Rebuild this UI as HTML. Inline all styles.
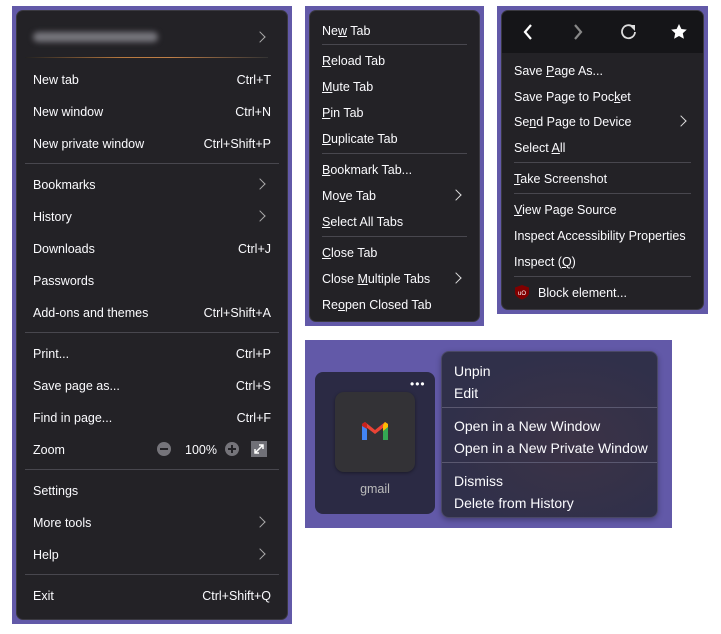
<!DOCTYPE html>
<html><head><meta charset="utf-8"><style>
*{margin:0;padding:0;box-sizing:border-box}
body{width:721px;height:634px;background:#fff;position:relative;overflow:hidden;font-family:"Segoe UI","Liberation Sans",sans-serif;color:#fbfbfe;font-size:12.5px}
.pur{position:absolute;background:#6259a8}
.menu{position:absolute;background:#232226;border-radius:7px;border:1px solid #3a3940}
.t{position:absolute;white-space:nowrap;line-height:16px;transform:translateY(-7px)}
.r{position:absolute;white-space:nowrap;line-height:16px;transform:translateY(-7px);text-align:right}
.sep{position:absolute;height:1px;background:#48474e}
.chev{position:absolute;width:8px;height:8px;border-right:1.3px solid #aaa;border-top:1.3px solid #aaa;transform:rotate(45deg)}
u{text-decoration:underline;text-underline-offset:1px}
</style></head><body>
<div class="pur" style="left:12px;top:6px;width:280px;height:618px"></div>
<div class="menu" style="left:16px;top:10px;width:272px;height:610px"></div>
<div style="position:absolute;left:33px;top:32px;width:125px;height:10px;background:#77767d;border-radius:5px;filter:blur(3px)"></div>
<div class="chev" style="left:256px;top:33px"></div>
<div style="position:absolute;left:25px;top:57px;width:243px;height:1px;background:linear-gradient(90deg,#222,#b8793e 40%,#c08048 60%,#333)"></div>
<div class="t" style="left:33px;top:79px">New tab</div><div class="r" style="right:450px;top:79px">Ctrl+T</div>
<div class="t" style="left:33px;top:111px">New window</div><div class="r" style="right:450px;top:111px">Ctrl+N</div>
<div class="t" style="left:33px;top:143px">New private window</div><div class="r" style="right:450px;top:143px">Ctrl+Shift+P</div>
<div class="sep" style="left:25px;top:163px;width:254px"></div>
<div class="t" style="left:33px;top:184px">Bookmarks</div><div class="chev" style="left:256px;top:180px"></div>
<div class="t" style="left:33px;top:216px">History</div><div class="chev" style="left:256px;top:212px"></div>
<div class="t" style="left:33px;top:248px">Downloads</div><div class="r" style="right:450px;top:248px">Ctrl+J</div>
<div class="t" style="left:33px;top:280px">Passwords</div>
<div class="t" style="left:33px;top:312px">Add-ons and themes</div><div class="r" style="right:450px;top:312px">Ctrl+Shift+A</div>
<div class="sep" style="left:25px;top:332px;width:254px"></div>
<div class="t" style="left:33px;top:353px">Print...</div><div class="r" style="right:450px;top:353px">Ctrl+P</div>
<div class="t" style="left:33px;top:385px">Save page as...</div><div class="r" style="right:450px;top:385px">Ctrl+S</div>
<div class="t" style="left:33px;top:417px">Find in page...</div><div class="r" style="right:450px;top:417px">Ctrl+F</div>
<div class="t" style="left:33px;top:449px">Zoom</div>
<div style="position:absolute;left:157px;top:442px;width:14px;height:14px;border-radius:50%;background:#75747a"><div style="position:absolute;left:3px;top:6px;width:8px;height:2px;background:#232226"></div></div>
<div class="t" style="left:185px;top:449px">100%</div>
<div style="position:absolute;left:225px;top:442px;width:14px;height:14px;border-radius:50%;background:#75747a"><div style="position:absolute;left:3px;top:6px;width:8px;height:2px;background:#232226"></div><div style="position:absolute;left:6px;top:3px;width:2px;height:8px;background:#232226"></div></div>
<svg style="position:absolute;left:251px;top:441px" width="16" height="16"><rect width="16" height="16" fill="#707077"/><path d="M4 12L12 4M8 4h4v4M4 8v4h4" stroke="#fff" stroke-width="1.5" fill="none"/></svg>
<div class="sep" style="left:25px;top:469px;width:254px"></div>
<div class="t" style="left:33px;top:490px">Settings</div>
<div class="t" style="left:33px;top:522px">More tools</div><div class="chev" style="left:256px;top:518px"></div>
<div class="t" style="left:33px;top:554px">Help</div><div class="chev" style="left:256px;top:550px"></div>
<div class="sep" style="left:25px;top:574px;width:254px"></div>
<div class="t" style="left:33px;top:595px">Exit</div><div class="r" style="right:450px;top:595px">Ctrl+Shift+Q</div>

<div class="pur" style="left:305px;top:6px;width:179px;height:320px"></div>
<div class="menu" style="left:309px;top:10px;width:171px;height:312px"></div>
<div class="t" style="left:322px;top:30px">Ne<u>w</u> Tab</div>
<div class="sep" style="left:322px;top:44px;width:145px"></div>
<div class="t" style="left:322px;top:60px"><u>R</u>eload Tab</div>
<div class="t" style="left:322px;top:86px"><u>M</u>ute Tab</div>
<div class="t" style="left:322px;top:112px"><u>P</u>in Tab</div>
<div class="t" style="left:322px;top:138px"><u>D</u>uplicate Tab</div>
<div class="sep" style="left:322px;top:153px;width:145px"></div>
<div class="t" style="left:322px;top:169px"><u>B</u>ookmark Tab...</div>
<div class="t" style="left:322px;top:195px">Mo<u>v</u>e Tab</div><div class="chev" style="left:452px;top:191px;border-color:#ddd"></div>
<div class="t" style="left:322px;top:221px"><u>S</u>elect All Tabs</div>
<div class="sep" style="left:322px;top:236px;width:145px"></div>
<div class="t" style="left:322px;top:252px"><u>C</u>lose Tab</div>
<div class="t" style="left:322px;top:278px">Close <u>M</u>ultiple Tabs</div><div class="chev" style="left:452px;top:274px;border-color:#ddd"></div>
<div class="t" style="left:322px;top:304px">Re<u>o</u>pen Closed Tab</div>

<div class="pur" style="left:497px;top:6px;width:211px;height:308px"></div>
<div class="menu" style="left:501px;top:10px;width:203px;height:300px"></div>
<div style="position:absolute;left:502px;top:11px;width:201px;height:42px;background:#151518;border-radius:6px 6px 0 0"></div>
<svg style="position:absolute;left:502px;top:11px" width="201" height="42">
<path d="M29 14L23 21L29 28" stroke="#fff" stroke-width="2.2" fill="none"/>
<path d="M73 14L79 21L73 28" stroke="#888" stroke-width="2.2" fill="none"/>
<path d="M131 16A6.5 6.5 0 1 0 133 21" stroke="#ddd" stroke-width="1.8" fill="none"/><path d="M127 14h6v6z" fill="#ddd"/>
<path d="M177 13l2.4 5 5.4.6-4 3.7 1.1 5.4-4.9-2.7-4.9 2.7 1.1-5.4-4-3.7 5.4-.6z" fill="#fff"/>
</svg>
<div class="t" style="left:514px;top:70px">Save <u>P</u>age As...</div>
<div class="t" style="left:514px;top:96px">Save Page to Poc<u>k</u>et</div>
<div class="t" style="left:514px;top:121px">Se<u>n</u>d Page to Device</div><div class="chev" style="left:677px;top:117px;border-color:#ddd"></div>
<div class="t" style="left:514px;top:147px">Select <u>A</u>ll</div>
<div class="sep" style="left:514px;top:162px;width:177px"></div>
<div class="t" style="left:514px;top:178px"><u>T</u>ake Screenshot</div>
<div class="sep" style="left:514px;top:193px;width:177px"></div>
<div class="t" style="left:514px;top:209px"><u>V</u>iew Page Source</div>
<div class="t" style="left:514px;top:235px">Inspect Accessibility Properties</div>
<div class="t" style="left:514px;top:261px">Inspect (<u>Q</u>)</div>
<div class="sep" style="left:514px;top:276px;width:177px"></div>
<svg style="position:absolute;left:514px;top:284px" width="16" height="16"><path d="M8 1L15 3.5V9C15 12 11 14.5 8 15.5C5 14.5 1 12 1 9V3.5Z" fill="#800000"/><text x="8" y="11" font-size="6" fill="#fff" text-anchor="middle" font-family="Liberation Sans">uO</text></svg>
<div class="t" style="left:538px;top:292px">Block element...</div>

<div class="pur" style="left:305px;top:340px;width:367px;height:188px"></div>
<div style="position:absolute;left:315px;top:372px;width:120px;height:142px;background:#2b2a44;border-radius:8px"></div>
<div style="position:absolute;left:410px;top:381px;color:#fff;font-size:12px;letter-spacing:1px;line-height:6px">•••</div>
<div style="position:absolute;left:335px;top:392px;width:80px;height:80px;background:#333236;border-radius:9px;box-shadow:0 1px 3px rgba(0,0,0,.4)"></div>
<svg style="position:absolute;left:360px;top:420px" width="30" height="24"><path d="M2 4v16h5V9" fill="#4285f4"/><path d="M23 9v11h5V4" fill="#34a853"/><path d="M2 4l13 10L28 4l-3-2-10 8L5 2z" fill="#ea4335"/><path d="M25 2l3 2v3l-5 4V5z" fill="#fbbc04"/><path d="M2 4l3-2 2 2v5L2 6z" fill="#c5221f"/></svg>
<div style="position:absolute;left:315px;top:481px;width:120px;text-align:center;color:#bbb;font-size:12.5px;line-height:16px">gmail</div>
<div style="position:absolute;left:441px;top:351px;width:217px;height:167px;border-radius:8px;background:radial-gradient(ellipse at 60% 55%,#3c3346,#30304a 70%);border:1px solid #4a4866;box-shadow:0 2px 6px rgba(0,0,0,.3)"></div>
<div class="t" style="left:454px;top:370px;font-size:14px">Unpin</div>
<div class="t" style="left:454px;top:392px;font-size:14px">Edit</div>
<div class="sep" style="left:442px;top:407px;width:215px;background:#5a5870"></div>
<div class="t" style="left:454px;top:425px;font-size:14px">Open in a New Window</div>
<div class="t" style="left:454px;top:447px;font-size:14px">Open in a New Private Window</div>
<div class="sep" style="left:442px;top:462px;width:215px;background:#5a5870"></div>
<div class="t" style="left:454px;top:480px;font-size:14px">Dismiss</div>
<div class="t" style="left:454px;top:502px;font-size:14px">Delete from History</div>
</body></html>
